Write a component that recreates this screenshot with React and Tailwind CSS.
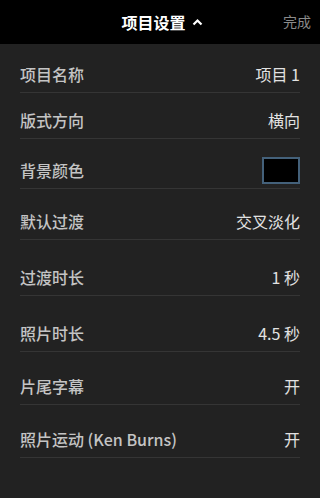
import React from "react";

const ROWS = [
  { label: "项目名称", value: "项目 1", h: "h-[49px]" },
  { label: "版式方向", value: "横向", h: "h-[46px]" },
  { label: "背景颜色", swatch: true, h: "h-[50px]" },
  { label: "默认过渡", value: "交叉淡化", h: "h-[51px]" },
  { label: "过渡时长", value: "1 秒", h: "h-[56px]" },
  { label: "照片时长", value: "4.5 秒", h: "h-[56px]" },
  { label: "片尾字幕", value: "开", h: "h-[53px]" },
  { label: "照片运动 (Ken Burns)", value: "开", h: "h-[53px]" },
];

export default function App() {
  return (
    <div
      className="w-[320px] h-[498px] bg-[#222222] flex flex-col overflow-hidden"
      style={{ fontFamily: '"Noto Sans CJK SC", "Noto Sans", sans-serif' }}
    >
      {/* header */}
      <div className="relative h-[44px] bg-black flex items-center justify-center shrink-0">
        <div className="flex items-center gap-[6px] text-white text-[16px] font-bold pl-[4px]">
          <span>项目设置</span>
          <svg width="11" height="8" viewBox="0 0 11 8" fill="none">
            <path d="M1.5 6.5 L5.5 2.5 L9.5 6.5" stroke="white" strokeWidth="2.2" />
          </svg>
        </div>
        <span className="absolute right-[9px] top-[11px] text-[14px] text-[#8a8a8a]">完成</span>
      </div>

      <div className="px-[20px] flex flex-col">
        {ROWS.map((r) => (
          <div
            key={r.label}
            className={`${r.h} flex items-end justify-between pb-[6px] border-b border-[#353535]`}
          >
            <span className="text-[16px] leading-[24px] text-[#c4c4c4] font-medium">{r.label}</span>
            {r.swatch ? (
              <div className="w-[38px] h-[27px] bg-black border-2 border-[#44617a] mb-[-2px]" />
            ) : (
              <span className="text-[16px] leading-[24px] text-[#e2e2e2]">{r.value}</span>
            )}
          </div>
        ))}
      </div>
    </div>
  );
}
